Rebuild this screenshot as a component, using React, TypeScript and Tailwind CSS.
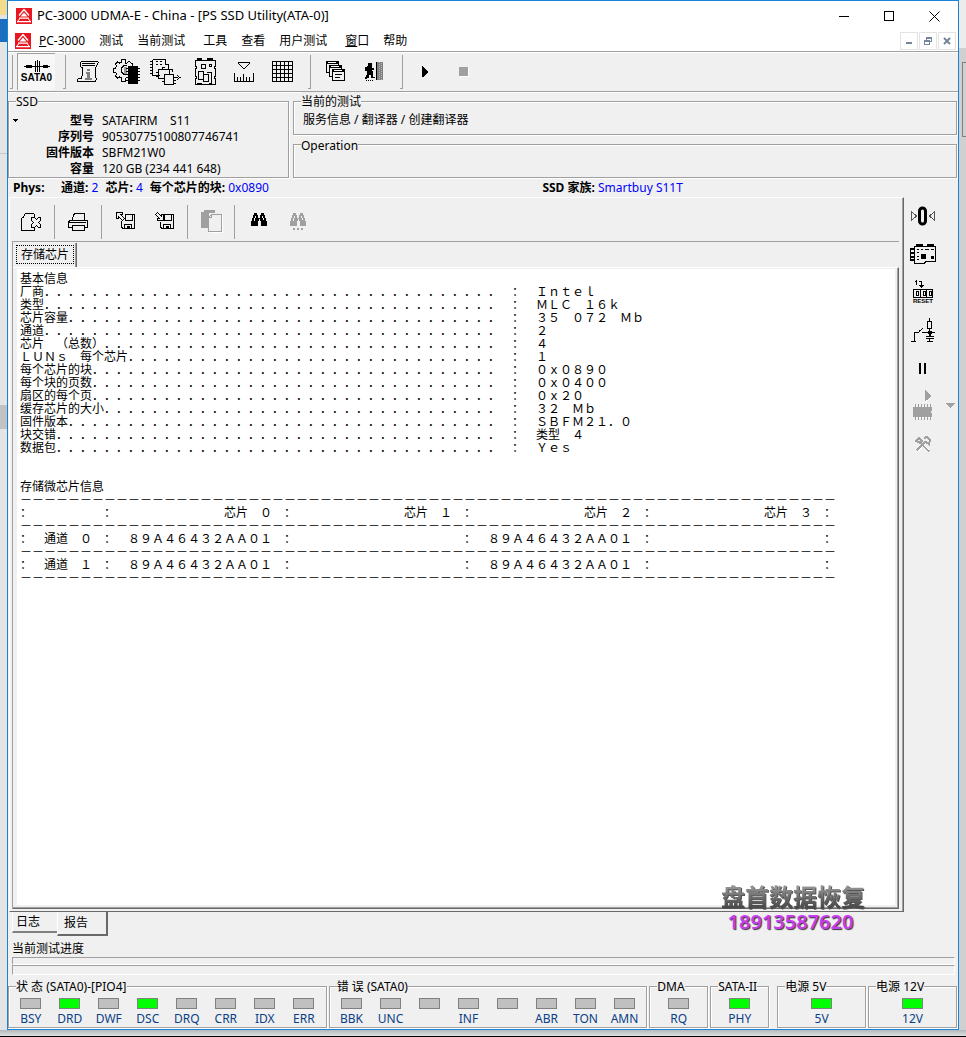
import type { ReactNode } from "react";

const menus = [
  { label: "PC-3000", hot: 1 },
  { label: "测试" },
  { label: "当前测试", wide: true },
  { label: "工具" },
  { label: "查看" },
  { label: "用户测试", wide: true },
  { label: "窗口", hot: 1 },
  { label: "帮助" },
];

const drive = [
  ["型号", "SATAFIRM    S11"],
  ["序列号", "90530775100807746741"],
  ["固件版本", "SBFM21W0"],
  ["容量", "120 GB (234 441 648)"],
];

const info = [
  ["厂商", "Intel"],
  ["类型", "MLC 16k"],
  ["芯片容量", "35 072 Mb"],
  ["通道", "2"],
  ["芯片 (总数)", "4"],
  ["LUNs 每个芯片", "1"],
  ["每个芯片的块", "0x0890"],
  ["每个块的页数", "0x0400"],
  ["扇区的每个页", "0x20"],
  ["缓存芯片的大小", "32 Mb"],
  ["固件版本", "SBFM21.0"],
  ["块交错", "类型 4"],
  ["数据包", "Yes"],
];

const chipId = "89A46432AA01";
const channels = [
  ["通道 0", chipId, "", chipId, ""],
  ["通道 1", chipId, "", chipId, ""],
];

// The report is set on a grid of full-width cells, so ASCII moves to its full-width forms.
const wide = (s: string) =>
  s
    .replace(/ /g, "\u3000")
    .replace(/[!-~]/g, (c) => String.fromCharCode(c.charCodeAt(0) + 0xfee0));

const rule = "-".repeat(68);

const reportText = wide(
  [
    "基本信息",
    ...info.map(([k, v]) => `${k.padEnd(40, ".")} : ${v}`),
    "",
    "",
    "存储微芯片信息",
    rule,
    `:      :${[0, 1, 2, 3].map((n) => `芯片 ${n}`.padStart(13) + " :").join("")}`,
    rule,
    ...channels.flatMap(([name, ...ids]) => [
      `: ${name} :${ids.map((id) => id.padStart(13) + " :").join("")}`,
      rule,
    ]),
  ].join("\n")
);

type Led = { name: string; on?: boolean };

const stateLeds: Led[] = [
  { name: "BSY" },
  { name: "DRD", on: true },
  { name: "DWF" },
  { name: "DSC", on: true },
  { name: "DRQ" },
  { name: "CRR" },
  { name: "IDX" },
  { name: "ERR" },
];

const errorLeds: Led[] = [
  { name: "BBK" },
  { name: "UNC" },
  { name: "" },
  { name: "INF" },
  { name: "" },
  { name: "ABR" },
  { name: "TON" },
  { name: "AMN" },
];

function Icon({ w, h, children }: { w: number; h: number; children: ReactNode }) {
  return (
    <svg
      width={w}
      height={h}
      viewBox={`0 0 ${w} ${h}`}
      fill="none"
      stroke="currentColor"
      shapeRendering="crispEdges"
      className="shrink-0"
      aria-hidden="true"
    >
      {children}
    </svg>
  );
}

function Logo() {
  return (
    <svg width="16" height="16" viewBox="0 0 16 16" className="shrink-0" aria-hidden="true">
      <path fill="#e8171f" d="M0 0h16v16H0z" />
      <path fill="none" stroke="#fff" strokeWidth="1.3" d="M8 1.500 3 7.500M8 1.500 13 7.500" />
      <path fill="#fff" d="M8 4.500 4.500 8.500h7zM3 9.500h10v1.200H3zM1 13h14v1.200H1z" />
      <path fill="none" stroke="#fff" d="M4 10.500 1.500 13.500M12 10.500l2.500 3" />
    </svg>
  );
}

const ScrollIcon = () => (
  <Icon w={22} h={24}>
    <path d="M4 1.500h17M21.500 2v1M20.500 3v2M19.500 5v2M18.500 7v11M19.500 18v2M3.500 2v5M4 7.500h2M5.500 8v8M4.500 16v3M5 3.500h13M5 5.500h13M1 21.500h17M.5 19v3M1 18.500h3M18.500 20v2" />
    <path fill="#808080" stroke="none" d="M10 9h3v2h-3zM9 12h4v6h-3v-4H9zM8 18h7v2H8z" />
  </Icon>
);

const GearChipIcon = () => (
  <Icon w={28} h={28}>
    <path d="M13 5.500h-1v-4H8.500v3l-2 .5-2-1-2 2 1 2-1 2H.5v4h2l1 2-1 2 2 2 2-1 2 1v3h4v-3M13 5.500l3-2 3 2v2" />
    <path d="M14 7.500h-3l-3 3v3l3 3h3" />
    <path d="M11 9h3v7h-3z" fill="#999" stroke="none" />
    <path
      d="M15 8h10v18H15zM13 10h14v1H13zM13 13h14v1H13zM13 16h14v1H13zM13 19h14v1H13zM13 22h14v1H13z"
      fill="currentColor"
      stroke="none"
    />
  </Icon>
);

const ChipFlowIcon = () => (
  <Icon w={32} h={28}>
    <path d="M2.500 1.500h13v5M2.500 1.500v16h7M0 3.500h2M0 6.500h2M0 9.500h2M0 12.500h2M0 15.500h2M6 3.500h2M10 3.500h2M6 6.500h2M10 6.500h2" />
    <path d="M8.500 20.500v-9h11v4M6 14.500h2M6 18.500h2M8.500 20.500h5M16 6.500h2v4M12 11v-2h3M22 14v-3h-3" />
    <path d="M14.500 26.500v-10h9v10zM12 20.500h2M12 23.500h2M24 19.500h4M27 17.500l3 2-3 2M24 22.500h2M24 25.500h2" />
  </Icon>
);

const BoardIcon = () => (
  <Icon w={24} h={28}>
    <path d="M2.500 2.500h20v5l-1 2 1 2v6l-1 2 1 2v5h-20v-5l1-2-1-2v-6l1-2-1-2zM4 .5h5M4 1.500h5M14 .5h6M14 1.500h6" />
    <path d="M8.500 6.500h4v4h-4zM16 6.500h2v2h-2zM5.500 13.500h5v8h-5zM10.500 16.500h5v7h-5zM13.500 14.500h5v11h-3M4 25.500h5" />
  </Icon>
);

const RulerIcon = () => (
  <Icon w={20} h={22}>
    <path d="M4 1.500h12M5 3.500h1M14 3.500h1M6 4.500h1M13 4.500h1M7 5.500h1M12 5.500h1M8 6.500h1M11 6.500h1M9 7.500h2M4 2.500h1M15 2.500h1M.5 12v8M19.500 12v8M0 20.500h20M3.500 16v4M6.500 16v4M9.500 13v7M12.500 16v4M15.500 16v4" />
  </Icon>
);

const GridIcon = () => (
  <Icon w={22} h={22}>
    <path d="M.5.5h20v20H.5zM4.500 0v21M8.500 0v21M12.500 0v21M16.500 0v21M0 4.500h21M0 8.500h21M0 12.500h21M0 16.500h21" />
  </Icon>
);

const WindowsIcon = () => (
  <Icon w={20} h={21}>
    <path fill="#f0f0f0" d="M.5.5h12v11H.5z" />
    <path strokeWidth="3" d="M0 1.500h13" />
    <path fill="#f0f0f0" d="M3.500 4.500h12v11h-12z" />
    <path strokeWidth="3" d="M3 5.500h13" />
    <path fill="#f0f0f0" d="M6.500 8.500h12v11h-12z" />
    <path strokeWidth="3" d="M6 9.500h13" />
    <path d="M9 13.500h7M9 16.500h5" />
    <path stroke="#fff" d="M2 1.500h8M5 5.500h8M8 9.500h8" />
  </Icon>
);

const ExitIcon = () => (
  <Icon w={20} h={22}>
    <path fill="currentColor" stroke="none" d="M3 2h4v3H3zM2 5h5v6H2zM0 6h2v4H0zM7 7h2v2H7zM2 11h3v3H2zM5 10h3v4H5zM1 14h3v3H1zM6 13h2v4H6zM0 16h2v2H0zM8 16h2v1H8z" />
    <path d="M1 19.500h8" strokeDasharray="1 1" />
    <path fill="#808080" stroke="none" d="M11 1h7v18h-7z" />
    <path d="M11.500 1v18" />
    <path stroke="#bbb" strokeDasharray="1 1" d="M14.500 1v18M16.500 2v17" />
  </Icon>
);

const PlayIcon = () => (
  <Icon w={8} h={12}>
    <path fill="currentColor" stroke="none" d="M1 0h1v1h1v1h1v1h1v1h1v1h1v2H6v1H5v1H4v1H3v1H1z" />
  </Icon>
);

const StopIcon = () => (
  <Icon w={10} h={10}>
    <path fill="#fff" stroke="none" d="M1 1h9v9H1z" />
    <path fill="#a0a0a0" stroke="none" d="M0 0h9v9H0z" />
  </Icon>
);

const CloseDocIcon = () => (
  <Icon w={21} h={20}>
    <path d="M4 1.500h9M13.500 2v3M3.500 2v2M2.500 4v1M1 5.500h2M.5 6v12M0 18.500h14M13.500 15v4" />
    <path d="M10.500 5.500h3l2 2 2-2h2v3l-2 2 2 2v3h-2l-2-2-2 2h-3v-3l2-2-2-2z" />
  </Icon>
);

const PrinterIcon = () => (
  <Icon w={21} h={20}>
    <path d="M4.500 8V6l2-4.500h9.500V8M1.500 8.500h18v7H16M1.500 8.500l-1 2v5H4M1 10.500h17M4.500 13.500h12v5h-12zM5 8.500h12" />
  </Icon>
);

const DiskIn = () => (
  <Icon w={20} h={19}>
    <path d="M9 2.500h9.500v14h-12l-1-2v-6M8.500 12v4M15.500 12v4M8.500 12.500h7M9 2.500v6h7v-6" />
    <path fill="currentColor" stroke="none" d="M11 14h3v2h-3z" />
    <path d="M.5.5h6v2h-2l4 4-2 2-4-4v2h-2z" fill="#f0f0f0" />
  </Icon>
);

const DiskOut = () => (
  <Icon w={20} h={19}>
    <path d="M9 2.500h9.500v14h-12l-1-2v-5M8.500 12v4M15.500 12v4M8.500 12.500h7M9 2.500v6h7v-6" />
    <path fill="currentColor" stroke="none" d="M11 14h3v2h-3z" />
    <path d="M2.500.5l4 4v-2h2v6h-6v-2h2l-4-4z" fill="#f0f0f0" />
  </Icon>
);

const PasteIcon = () => (
  <Icon w={22} h={23}>
    <path fill="#a0a0a0" stroke="none" d="M3 0h11v3H8v15H0V2h3z" />
    <path stroke="#fff" d="M21.500 5v17.500H8" />
    <path stroke="#a0a0a0" fill="#f0f0f0" d="M10.500 4.500h9.500v16.500H7.500V7.500z" />
    <path stroke="#a0a0a0" d="M7.500 7.500h3v-3" />
  </Icon>
);

function Binoculars({ more }: { more?: boolean }) {
  return (
    <Icon w={16} h={18}>
      <path
        fill="currentColor"
        stroke="none"
        d="M3 0h3v2h1v3h2V2h1V0h3v2h1v3h1v3h1v5h-6V8H7v5H0V8h1V5h1V2h1z"
      />
      <path stroke="#f0f0f0" d="M4.500 3v2M3.500 5v3M11.500 3v2M12.500 5v2M8 6v2" />
      {more && <path strokeWidth="2" strokeDasharray="2 2" d="M3 16h10" />}
    </Icon>
  );
}

const ZeroIcon = () => (
  <Icon w={24} h={20}>
    <path d="M.5 5.500v9l5-4.500zM23.500 5.500v9l-5-4.500z" strokeWidth="1" stroke="#555" />
    <rect x="8.500" y="2" width="6" height="16" rx="3" strokeWidth="3" shapeRendering="auto" />
  </Icon>
);

const PowerBoardIcon = () => (
  <Icon w={28} h={22}>
    <path d="M5.500 3.500h21v15h-10l-1 2h-10z" />
    <path strokeWidth="2" d="M7 2h7M18 2h7" />
    <path strokeWidth="2" d="M1 6h4M1 10h4M1 14h4M1 17h4" />
    <path d="M1.500 5v12M8 6.500h2M12 6.500h2M16 6.500h4M22 6.500h3M8 9.500h2M8 13.500h2M8 16.500h2" />
    <path fill="currentColor" stroke="none" d="M12 11h5v5h-5zM22 13h3v3h-3z" />
  </Icon>
);

const CircuitIcon = () => (
  <Icon w={25} h={26}>
    <path d="M18.500 1v3M16.500 4.500h4v7h-4zM18.500 12v4M11 15.500h13M0 24.500h5M3.500 24v-9M3 15.500h5M8 14.500l4-3M15 19.500h8M15 21.500h8M18.500 22v3M16 24.500h6" />
    <path fill="currentColor" stroke="none" d="M17 14h4v3h-4zM18 17h2v3h-2z" />
  </Icon>
);

const RunChipIcon = () => (
  <Icon w={20} h={32}>
    <path fill="#a0a0a0" stroke="none" d="M12 0l6 6-6 6z" />
    <path stroke="#fff" d="M12 12.500l6.500-6M2 27.500h17" />
    <path fill="#a0a0a0" stroke="none" d="M0 17h19v4h-1v2h1v4H0z" />
    <path stroke="#a0a0a0" strokeDasharray="1 2" strokeWidth="3" d="M2 15.500h16M2 28.500h16" />
  </Icon>
);

const ToolsIcon = () => (
  <Icon w={17} h={17}>
    <path
      stroke="#a0a0a0"
      strokeWidth="2"
      d="M1.500 14.500l9-9M4.500 5.500l10 10M1 5l3-3 3 3-2 2zM9 2l3-1 3 3-1 4-3-2"
    />
    <path stroke="#fff" d="M3 15.500l4-4M9 9l5 5" />
  </Icon>
);

function ToolButton({ label, disabled, children }: { label: string; disabled?: boolean; children: ReactNode }) {
  return (
    <button
      type="button"
      aria-label={label}
      disabled={disabled}
      className="flex h-9 w-[39px] shrink-0 items-center justify-center disabled:text-[#a0a0a0]"
    >
      {children}
    </button>
  );
}

function Group({ title, className, children }: { title: string; className?: string; children?: ReactNode }) {
  return (
    <fieldset
      className={`min-w-0 border border-[#a0a0a0] shadow-[1px_1px_0_#fff,inset_1px_1px_0_#fff] ${className ?? ""}`}
    >
      <legend className="ml-[7px] h-[18px] bg-[#f0f0f0] pt-[2px] leading-4 whitespace-pre">{title}</legend>
      {children}
    </fieldset>
  );
}

function LedItem({ name, on }: Led) {
  return (
    <div className="flex w-[39px] flex-col items-center text-[#0a3f86]">
      <span className={`h-[11px] w-[21px] border border-[#808080] ${on ? "bg-[#00ff00]" : "bg-[#c0c0c0]"}`} />
      <span className="mt-[2px] h-4 leading-4">{name}</span>
    </div>
  );
}

function LedGroup({ title, leds, className }: { title: string; leds: Led[]; className: string }) {
  return (
    <Group title={title} className={className}>
      <div className="flex justify-center pt-[3px]">
        {leds.map((led, i) => (
          <LedItem key={i} {...led} />
        ))}
      </div>
    </Group>
  );
}

function TitleBar() {
  return (
    <div className="flex h-[30px] items-center bg-white pl-2">
      <Logo />
      <h1 className="flex-1 pl-[5px] text-[13px]">PC-3000 UDMA-E - China - [PS SSD Utility(ATA-0)]</h1>
      <button type="button" aria-label="Minimize" className="flex h-full w-[45px] items-center justify-center">
        <Icon w={10} h={10}>
          <path d="M0 5.500h10" />
        </Icon>
      </button>
      <button type="button" aria-label="Maximize" className="flex h-full w-[45px] items-center justify-center">
        <Icon w={10} h={10}>
          <path d="M.5.5h9v9h-9z" />
        </Icon>
      </button>
      <button type="button" aria-label="Close" className="flex h-full w-[47px] items-center justify-center">
        <svg width="11" height="11" viewBox="0 0 11 11" stroke="#000" aria-hidden="true">
          <path d="M.5.5l10 10M10.500.5l-10 10" />
        </svg>
      </button>
    </div>
  );
}

function MenuBar() {
  const child = "flex h-[18px] w-[18px] items-center justify-center border border-[#e3e3e3] text-[#76859b]";
  return (
    <nav className="flex h-5 items-center bg-white pr-[2px] pl-[7px]">
      <Logo />
      <div className="flex flex-1 pl-px">
        {menus.map((m) => (
          <button key={m.label} type="button" className={m.wide ? "pr-[11px] pl-[7px]" : "px-[7px]"}>
            {m.hot ? (
              <>
                <span className="underline">{m.label.slice(0, 1)}</span>
                {m.label.slice(1)}
              </>
            ) : (
              m.label
            )}
          </button>
        ))}
      </div>
      <div className="flex gap-px">
        <button type="button" aria-label="Minimize child" className={child}>
          <Icon w={8} h={8}>
            <path strokeWidth="2" d="M1 6h6" />
          </Icon>
        </button>
        <button type="button" aria-label="Restore child" className={child}>
          <Icon w={8} h={8}>
            <path d="M.5 4.500h5v3h-5zM2.500 3V1.500h5v3H6M2 .5h6M0 3.500h6" />
          </Icon>
        </button>
        <button type="button" aria-label="Close child" className={child}>
          <Icon w={8} h={8}>
            <path strokeWidth="2" shapeRendering="auto" d="M1 1l6 6M7 1L1 7" />
          </Icon>
        </button>
      </div>
    </nav>
  );
}

function Grip({ className }: { className?: string }) {
  return <span className={`h-[34px] w-[3px] shrink-0 border-r border-b border-[#a0a0a0] ${className ?? ""}`} />;
}

function MainToolbar() {
  return (
    <div className="flex h-[41px] items-center border-y border-[#a0a0a0] pl-[2px] shadow-[inset_0_1px_0_#fff,0_1px_0_#fff]">
      <Grip />
      <button
        type="button"
        className="ml-1 flex h-[37px] w-[38px] flex-col items-center justify-center border-t border-l border-[#a0a0a0] bg-[#f7f7f7]"
      >
        <Icon w={28} h={12}>
          <path strokeWidth="3" d="M3 6.500h6M20 6.500h5" />
          <path d="M1 6.500h26M12.500 1v11M16.500 1v11M14.500 0v12" />
        </Icon>
        <span className="font-['Liberation_Sans',sans-serif] text-[10px] leading-3 font-bold">SATA0</span>
      </button>
      <Grip className="mr-[2px] ml-[8px]" />
      <ToolButton label="Service information"><ScrollIcon /></ToolButton>
      <ToolButton label="Utility settings"><GearChipIcon /></ToolButton>
      <ToolButton label="Chips"><ChipFlowIcon /></ToolButton>
      <ToolButton label="Board"><BoardIcon /></ToolButton>
      <ToolButton label="Scale"><RulerIcon /></ToolButton>
      <ToolButton label="Sector map"><GridIcon /></ToolButton>
      <Grip className="mr-[5px] ml-[6px]" />
      <ToolButton label="Windows"><WindowsIcon /></ToolButton>
      <ToolButton label="Exit"><ExitIcon /></ToolButton>
      <Grip className="mr-[2px] ml-[6px]" />
      <ToolButton label="Run"><PlayIcon /></ToolButton>
      <ToolButton label="Stop" disabled><StopIcon /></ToolButton>
    </div>
  );
}

function DriveInfo() {
  return (
    <div className="grid grid-cols-[281px_1fr] gap-x-1 pr-px">
      <Group title="SSD">
        <div className="flex items-start pt-[3px]">
          <button type="button" aria-label="Select drive" className="pt-[6px] pl-1">
            <Icon w={6} h={3}>
              <path fill="currentColor" stroke="none" d="M0 0h5v1H4v1H3v1H2V2H1V1H0z" />
            </Icon>
          </button>
          <dl className="grid flex-1 grid-cols-[75px_1fr] gap-x-2 leading-4">
            {drive.map(([k, v]) => (
              <div key={k} className="contents">
                <dt className="text-right font-bold">{k}</dt>
                <dd className="whitespace-pre">{v}</dd>
              </div>
            ))}
          </dl>
        </div>
      </Group>
      <div className="flex flex-col gap-px">
        <Group title="当前的测试" className="flex-1">
          <p className="pl-[9px] leading-5">服务信息 / 翻译器 / 创建翻译器</p>
        </Group>
        <Group title="Operation" className="flex-1" />
      </div>
    </div>
  );
}

function PhysLine() {
  return (
    <div className="grid h-[19px] grid-cols-[9fr_7fr] items-center">
      <p className="flex gap-[7px] pl-[5px]">
        <b className="w-[41px]">Phys:</b>
        <span><b>通道:</b> <span className="text-[#0000ff]">2</span></span>
        <span><b>芯片:</b> <span className="text-[#0000ff]">4</span></span>
        <span><b>每个芯片的块:</b> <span className="text-[#0000ff]">0x0890</span></span>
      </p>
      <p>
        <b>SSD 家族:</b> <span className="text-[#0000ff]">Smartbuy S11T</span>
      </p>
    </div>
  );
}

function ReportToolbar() {
  const sep = "mr-[4px] ml-[3px] h-[34px] w-px shrink-0 bg-[#a0a0a0]";
  return (
    <div className="flex h-[43px] items-center pt-1 pl-[2px]">
      <ToolButton label="Close report"><CloseDocIcon /></ToolButton>
      <span className={sep} />
      <ToolButton label="Print"><PrinterIcon /></ToolButton>
      <span className={sep} />
      <ToolButton label="Load"><DiskIn /></ToolButton>
      <ToolButton label="Save"><DiskOut /></ToolButton>
      <span className={sep} />
      <ToolButton label="Copy" disabled><PasteIcon /></ToolButton>
      <span className={sep} />
      <ToolButton label="Find"><Binoculars /></ToolButton>
      <ToolButton label="Find next" disabled><Binoculars more /></ToolButton>
    </div>
  );
}

function Sidebar() {
  const item = "flex h-[38px] w-[30px] items-center justify-center disabled:text-[#a0a0a0]";
  return (
    <aside className="flex w-[54px] shrink-0 pl-[4px]">
      <div className="flex flex-col">
        <button type="button" aria-label="Recalibrate" className={item}><ZeroIcon /></button>
        <button type="button" aria-label="Power board" className={item}><PowerBoardIcon /></button>
        <button type="button" aria-label="Reset" className={item}>
          <span className="flex flex-col items-center">
            <Icon w={22} h={19}>
              <path d="M3 2.500h2M4.500 1v5M7 2.500h3M9.500 3v4M7 6.500h5M8 7.500h3M9.500 7v2M1 10.500h20M1 18.500h20M1.500 10v9M8.500 10v9M14.500 10v9M20.500 10v9" />
              <path d="M4 12.500h2v4h-2zM11 12.500h2v4h-2zM17 12.500h2v4h-2z" />
            </Icon>
            <span className="font-['Liberation_Sans',sans-serif] text-[6px] leading-[7px] font-bold">RESET</span>
          </span>
        </button>
        <button type="button" aria-label="Circuit" className={item}><CircuitIcon /></button>
        <button type="button" aria-label="Pause" className={item}>
          <Icon w={8} h={11}>
            <path strokeWidth="2" d="M1 0v11M6 0v11" />
          </Icon>
        </button>
        <button type="button" aria-label="Run chip" disabled className={item}><RunChipIcon /></button>
        <button type="button" aria-label="Tools" disabled className={item}><ToolsIcon /></button>
      </div>
      <button type="button" aria-label="More" className="mt-[206px] ml-2 self-start">
        <Icon w={10} h={6}>
          <path fill="#a0a0a0" stroke="none" d="M0 0h9L4.500 5z" />
        </Icon>
      </button>
    </aside>
  );
}

function Report() {
  return (
    <section className="ml-px flex min-w-0 flex-1 flex-col border-t border-l border-r border-b border-white border-r-[#696969] border-b-[#696969] shadow-[inset_-1px_0_0_#a0a0a0]">
      <ReportToolbar />
      <div className="mr-[4px] mb-[2px] ml-[2px] flex flex-1 flex-col border-t border-l border-[#a0a0a0]">
        <div className="flex h-[25px] items-end pl-px">
          <button
            type="button"
            className="h-[24px] w-[63px] border-r border-[#696969] px-[2px] pt-[2px] pb-[3px] shadow-[inset_-1px_0_0_#a0a0a0]"
          >
            <span className="block h-[19px] w-[58px] border border-dotted border-black text-center leading-[17px]">
              存储芯片
            </span>
          </button>
        </div>
        <div className="flex flex-1 border-t border-r border-b border-t-white border-r-[#696969] border-b-[#696969]">
          <div className="flex flex-1 border-r border-b border-[#a0a0a0] pt-px pr-[2px] pb-[2px] pl-1">
            <pre className="flex-1 overflow-hidden bg-white pt-[2px] pl-[3px] font-['Noto_Sans_CJK_SC',sans-serif] text-xs leading-[13px] [font-kerning:none] [text-spacing-trim:space-all]">
              {reportText}
            </pre>
          </div>
        </div>
      </div>
    </section>
  );
}

function BottomTabs() {
  return (
    <div className="flex h-6 items-start pl-1">
      <button
        type="button"
        className="h-[21px] w-[45px] border-b-2 border-l border-b-[#808080] border-l-white pl-[3px] text-left leading-5"
      >
        日志
      </button>
      <button
        type="button"
        className="h-6 w-[51px] border-r-2 border-b-2 border-l border-r-[#696969] border-b-[#696969] border-l-white pl-[6px] text-left"
      >
        报告
      </button>
    </div>
  );
}

function Backdrop() {
  return (
    <div className="flex w-[7px] shrink-0 flex-col bg-[#e4e4e4]">
      <span className="h-[15px] bg-[#f5dc8d]" />
      <span className="h-1" />
      <span className="h-[23px] bg-[#1a6fbe]" />
      <span className="mt-[111px] h-px bg-[#c8c8c8]" />
      <span className="mt-[251px] h-6 bg-[#c2c2c2]" />
    </div>
  );
}

export default function App() {
  return (
    <div className="relative flex min-h-screen flex-col bg-[#d0d2d2] font-['Noto_Sans','Noto_Sans_CJK_SC',sans-serif] text-xs text-black">
      <div className="flex flex-1">
        <Backdrop />
        <main className="flex min-w-0 flex-1 flex-col border border-[#1883d7] bg-[#f0f0f0]">
          <TitleBar />
          <MenuBar />
          <MainToolbar />
          <DriveInfo />
          <PhysLine />
          <div className="flex flex-1">
            <Report />
            <Sidebar />
          </div>
          <BottomTabs />
          <div className="pr-[3px] pl-1">
            <p className="pt-[5px] leading-4">当前测试进度</p>
            <div className="h-2 border border-[#a0a0a0] border-r-white border-b-white" />
            <div className="h-[10px] border border-[#a0a0a0] border-r-white border-b-white" />
          </div>
          <div className="mt-[2px] flex h-[52px] gap-[2px] pr-px pb-px">
            <LedGroup title="状 态 (SATA0)-[PIO4]" leds={stateLeds} className="flex-[317]" />
            <LedGroup title="错 误 (SATA0)" leds={errorLeds} className="flex-[317]" />
            <LedGroup title="DMA" leds={[{ name: "RQ" }]} className="flex-[57]" />
            <LedGroup title="SATA-II" leds={[{ name: "PHY", on: true }]} className="flex-[57]" />
            <LedGroup title="电源 5V" leds={[{ name: "5V", on: true }]} className="ml-[6px] flex-[87]" />
            <LedGroup title="电源 12V" leds={[{ name: "12V", on: true }]} className="flex-[87]" />
          </div>
        </main>
        <div className="flex w-[7px] shrink-0 flex-col bg-[#d0d0d0]">
          <span className="h-12 bg-[#ececec]" />
          <span className="mt-[14px] ml-[3px] h-[75px] border border-r-0 border-[#808080]" />
        </div>
      </div>
      <div className="h-[7px] border-b border-black bg-linear-to-b from-[#b4b8ba] to-[#dfe2e2]" />

      {/* Vendor stamp */}
      <div className="absolute right-[101px] bottom-[103px] flex flex-col items-center font-bold">
        <span className="bg-linear-to-b from-[#a0a0a0] to-[#404040] bg-clip-text text-2xl leading-[26px] text-transparent drop-shadow-[1px_1px_0_#555]">
          盘首数据恢复
        </span>
        <span className="pr-[5px] text-xl leading-6 font-semibold text-[#c83cf0] [text-shadow:1px_1px_1px_#333]">
          18913587620
        </span>
      </div>
    </div>
  );
}
